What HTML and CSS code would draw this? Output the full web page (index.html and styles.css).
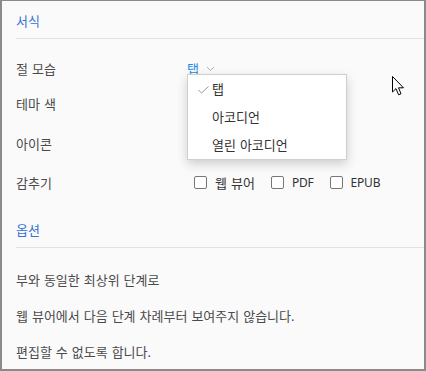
FILE: index.html
```html
<!DOCTYPE html>
<html lang="ko">
<head>
    <meta charset="UTF-8">
    <meta name="viewport" content="width=device-width, initial-scale=1.0">
    <link rel="stylesheet" href="styles.css">
    <title>서식</title>
</head>
<body>
    <div class="panel">
        <!-- 서식 -->
        <div class="section-head">서식</div>
        <div class="rows">
            <div class="row row-shape">
                <span class="label">절 모습</span>
                <div class="select">
                    <span class="select-value">탭</span>
                    <svg class="chevron" width="9" height="6" viewBox="0 0 9 6"><polyline points="1,1 4.5,4.5 8,1" fill="none" stroke="#9fb3c8" stroke-width="1"/></svg>
                    <ul class="menu">
                        <li class="menu-item selected">
                            <svg class="check" width="11" height="8" viewBox="0 0 11 8"><polyline points="0.5,4 3.5,7 10.5,0.5" fill="none" stroke="#999" stroke-width="1"/></svg>
                            탭
                        </li>
                        <li class="menu-item">아코디언</li>
                        <li class="menu-item">열린 아코디언</li>
                    </ul>
                </div>
            </div>
            <div class="row row-theme">
                <span class="label">테마 색</span>
            </div>
            <div class="row row-icon">
                <span class="label">아이콘</span>
            </div>
            <div class="row row-hide">
                <span class="label">감추기</span>
                <div class="checks">
                    <label class="check-item"><span class="box"></span>웹 뷰어</label>
                    <label class="check-item latin"><span class="box"></span>PDF</label>
                    <label class="check-item latin"><span class="box"></span>EPUB</label>
                </div>
            </div>
        </div>

        <!-- 옵션 -->
        <div class="section-head section-options">옵션</div>
        <div class="options">
            <p>부와 동일한 최상위 단계로</p>
            <p>웹 뷰어에서 다음 단계 차례부터 보여주지 않습니다.</p>
            <p>편집할 수 없도록 합니다.</p>
        </div>

        <svg class="cursor" width="13" height="20" viewBox="0 0 13 20">
            <path d="M0.5,0.5 L0.5,16 L4,12.6 L6.6,18.8 L9,17.8 L6.5,11.8 L11.5,11.8 Z" fill="#fff" stroke="#000" stroke-width="1" stroke-linejoin="miter"/>
        </svg>
    </div>
</body>
</html>
```

FILE: styles.css
```css
* {
    box-sizing: border-box;
}
body {
    margin: 0;
    font-family: "Noto Sans", "Noto Sans CJK KR", sans-serif;
    font-size: 13px;
    color: #4a4a4a;
    word-spacing: 0.6px;
}
.panel {
    position: relative;
    width: 426px;
    height: 371px;
    background: #fafafa;
    border: 2px solid #8a8a8a;
    border-top-width: 1px;
    padding-left: 14px;
    overflow: hidden;
}
.section-head {
    color: #3574d4;
    line-height: 16px;
    padding: 12px 0 9px;
    border-bottom: 1px solid #e1e1e1;
}
.section-options {
    padding-top: 23px;
}
.rows {
    padding-top: 12px;
}
.row {
    display: flex;
    align-items: center;
}
.row-shape {
    height: 34px;
}
.row-theme {
    height: 36px;
}
.row-icon {
    height: 44px;
}
.row-hide {
    height: 34px;
}
.label {
    width: 171px;
    flex-shrink: 0;
}
.select {
    position: relative;
    display: flex;
    align-items: center;
    gap: 7px;
}
.select-value {
    color: #1e88e5;
}
.chevron {
    margin-top: 1px;
}
.menu {
    position: absolute;
    top: 15px;
    left: 0;
    width: 160px;
    margin: 0;
    padding: 0;
    list-style: none;
    background: #fff;
    border: 1px solid #cfcfcf;
    box-shadow: 0 4px 10px rgba(0, 0, 0, 0.18);
    z-index: 10;
}
.menu-item {
    position: relative;
    height: 28px;
    line-height: 28px;
    padding-left: 24px;
    color: #333;
}
.check {
    position: absolute;
    left: 10px;
    top: 11px;
}
.checks {
    display: flex;
    align-items: center;
    padding-left: 7px;
}
.check-item {
    display: flex;
    align-items: center;
    gap: 8px;
    margin-right: 16px;
    color: #333;
}
.latin {
    font-size: 12px;
    letter-spacing: -0.2px;
}
.box {
    width: 13px;
    height: 13px;
    border: 1px solid #777;
    border-radius: 2px;
    background: #fff;
}
.options {
    padding-top: 14px;
}
.options p {
    margin: 0;
    height: 36px;
    line-height: 36px;
}
.cursor {
    position: absolute;
    left: 390px;
    top: 75px;
}
```
